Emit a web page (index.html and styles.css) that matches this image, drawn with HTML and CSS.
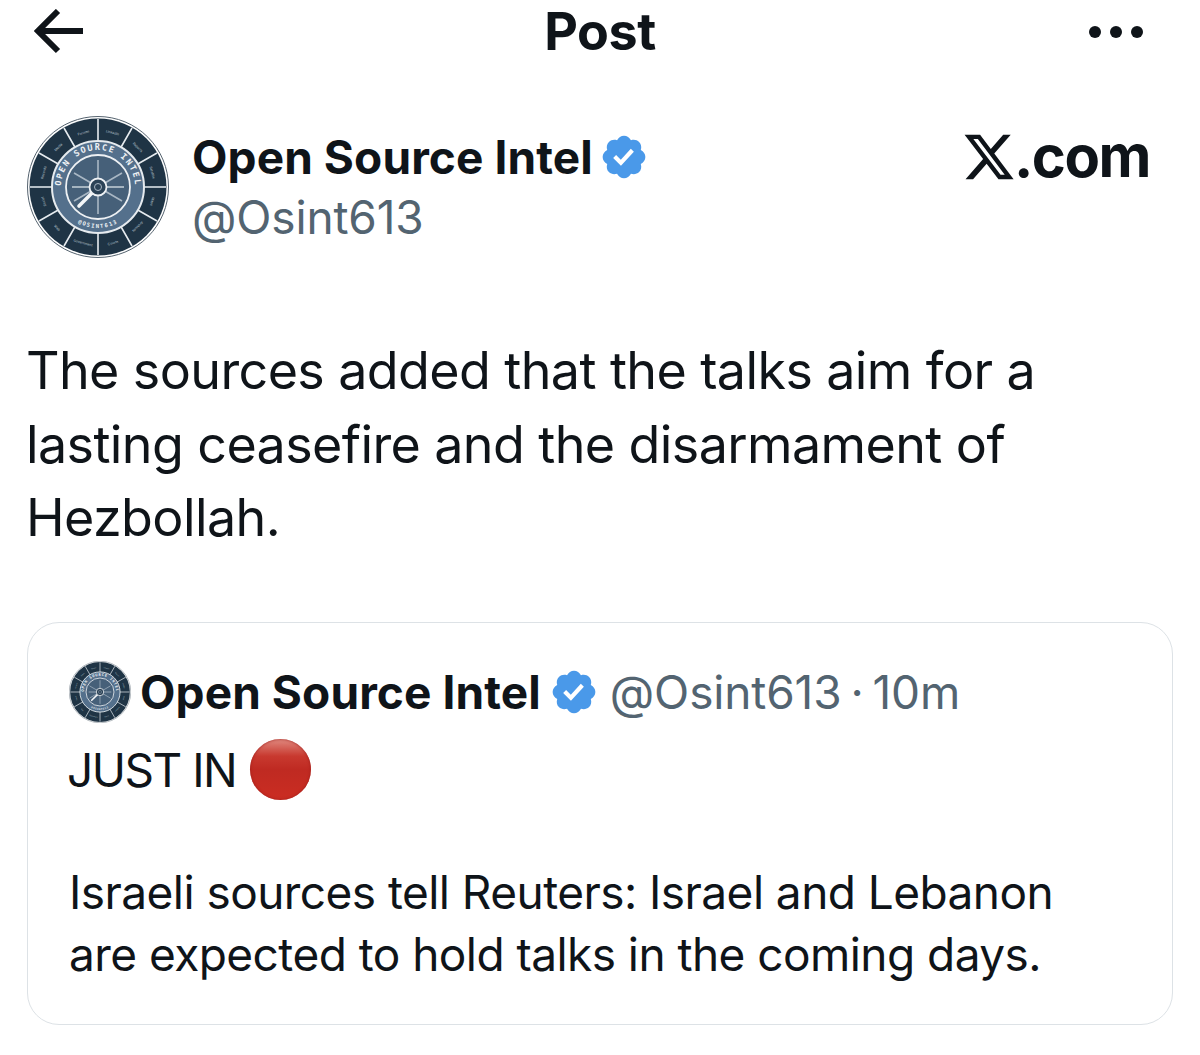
FILE: index.html
```html
<!DOCTYPE html>
<html lang="en">

<head>
    <meta charset="UTF-8">
    <title>Post</title>
    <link rel="stylesheet" href="styles.css">
</head>

<body>
    <div class="page">
        <div class="topbar">
            <svg class="back" viewBox="0 0 50 46">
                <path d="M49 22H4M24 2L4 22l20 20" fill="none" stroke="#0f1419" stroke-width="6"/>
            </svg>
            <div class="topbar-title">Post</div>
            <svg class="more" viewBox="0 0 56 14">
                <circle cx="7" cy="7" r="6"/>
                <circle cx="28" cy="7" r="6"/>
                <circle cx="49" cy="7" r="6"/>
            </svg>
        </div>

        <div class="author">
            <svg class="avatar" viewBox="0 0 142 142">
                <defs>
                    <path id="badge-path" d="M22.25 12c0-1.43-.88-2.67-2.19-3.34.46-1.39.2-2.9-.81-3.91s-2.52-1.27-3.91-.81c-.66-1.31-1.91-2.19-3.34-2.19s-2.67.88-3.33 2.19c-1.4-.46-2.91-.2-3.92.81s-1.26 2.52-.8 3.91c-1.31.67-2.2 1.91-2.2 3.34s.89 2.67 2.2 3.34c-.46 1.39-.21 2.9.8 3.91s2.52 1.26 3.91.81c.67 1.31 1.91 2.19 3.34 2.19s2.68-.88 3.34-2.19c1.39.45 2.9.2 3.91-.81s1.27-2.52.81-3.91c1.31-.67 2.19-1.91 2.19-3.34zm-11.71 4.2L6.8 12.46l1.41-1.42 2.26 2.26 4.8-5.23 1.47 1.36-6.2 6.77z"/>
                    <path id="ring-top" d="M34 71a37 37 0 0 1 74 0"/>
                    <path id="ring-bottom" d="M30 71a41 41 0 0 0 82 0"/>
                    <symbol id="wheel" viewBox="0 0 142 142">
                        <circle cx="71" cy="71" r="70.5" fill="#fff" stroke="#55636f" stroke-width="1"/>
                        <circle cx="71" cy="71" r="68.5" fill="#1f3445"/>
                        <g stroke="#e6ebef" stroke-width="1.6">
                            <path d="M71 3v24M71 115v24M3 71h24M115 71h24"/>
                            <path d="M105 12l-12 21M49 109l-12 21M130 37l-21 12M33 93l-21 12"/>
                            <path d="M37 12l12 21M93 109l12 21M12 37l21 12M109 93l21 12"/>
                        </g>
                        <g class="wheel-label">
                            <text x="71" y="16" transform="rotate(-15 71 71)">Forums</text>
                            <text x="71" y="16" transform="rotate(15 71 71)">LinkedIn</text>
                            <text x="71" y="16" transform="rotate(45 71 71)">Reports</text>
                            <text x="71" y="16" transform="rotate(75 71 71)">Satellite</text>
                            <text x="71" y="16" transform="rotate(105 71 71)">Maps</text>
                            <text x="71" y="16" transform="rotate(135 71 71)">Archives</text>
                            <text x="71" y="130" transform="rotate(-15 71 71)">Courts</text>
                            <text x="71" y="130" transform="rotate(15 71 71)">Government</text>
                            <text x="71" y="130" transform="rotate(45 71 71)">Web</text>
                            <text x="71" y="16" transform="rotate(-105 71 71)">Social</text>
                            <text x="71" y="16" transform="rotate(-75 71 71)">Records</text>
                            <text x="71" y="16" transform="rotate(-45 71 71)">Media</text>
                        </g>
                        <circle cx="71" cy="71" r="46" fill="#54708c" stroke="#e6ebef" stroke-width="2"/>
                        <circle cx="71" cy="71" r="32" fill="#466079" stroke="#eef1f4" stroke-width="1.8"/>
                        <text class="ring-text"><textPath href="#ring-top" startOffset="50%" text-anchor="middle">OPEN SOURCE INTEL</textPath></text>
                        <text class="ring-text ring-text-small"><textPath href="#ring-bottom" startOffset="50%" text-anchor="middle">@OSINT613</textPath></text>
                        <g stroke="#a9b7c4" stroke-width="1.6">
                            <path d="M71 44v54M47 57l48 28M47 85l48-28"/>
                        </g>
                        <path d="M45 71h52" stroke="#c6d0d9" stroke-width="1.4"/>
                        <path d="M65 77L52 90" stroke="#f4f6f8" stroke-width="3.6" stroke-linecap="round"/>
                        <circle cx="71" cy="71" r="8.5" fill="#2b4256" stroke="#eef1f4" stroke-width="1.8"/>
                        <circle cx="71" cy="71" r="3.5" fill="none" stroke="#a9b7c4" stroke-width="1"/>
                    </symbol>
                </defs>
                <use href="#wheel"/>
            </svg>
            <div class="author-text">
                <div class="author-name">
                    <span>Open Source Intel</span>
                    <svg class="badge" viewBox="0 0 24 24"><use href="#badge-path"/></svg>
                </div>
                <div class="author-handle">@Osint613</div>
            </div>
            <div class="brand">
                <svg class="brand-x" viewBox="1 2 22 20">
                    <path d="M18.244 2.25h3.308l-7.227 8.26 8.502 11.24H16.17l-5.214-6.817L4.99 21.75H1.68l7.73-8.835L1.254 2.25H8.08l4.713 6.231zm-1.161 17.52h1.833L7.084 4.126H5.117z"/>
                </svg>
                <span>.com</span>
            </div>
        </div>

        <p class="post-text">The sources added that the talks aim for a<br>lasting ceasefire and the disarmament of<br>Hezbollah.</p>

        <div class="quote">
            <div class="quote-head">
                <svg class="quote-avatar" viewBox="0 0 142 142"><use href="#wheel"/></svg>
                <span class="quote-name">Open Source Intel</span>
                <svg class="quote-badge" viewBox="0 0 24 24"><use href="#badge-path"/></svg>
                <span class="quote-meta">@Osint613<span class="quote-dot">·</span>10m</span>
            </div>
            <div class="quote-just"><span>JUST IN</span><span class="red-dot"></span></div>
            <p class="quote-text">Israeli sources tell Reuters: Israel and Lebanon<br>are expected to hold talks in the coming days.</p>
        </div>
    </div>
</body>

</html>
```
FILE: styles.css
```css
html,
body {
    margin: 0;
    padding: 0;
    background: #fff;
}

.page {
    width: 1200px;
    height: 1055px;
    overflow: hidden;
    color: #0f1419;
    font-family: "Inter", "Liberation Sans", sans-serif;
}

.topbar {
    display: grid;
    grid-template-columns: 1fr auto 1fr;
    align-items: center;
    height: 62px;
    padding: 0 56px 0 34px;
}

.back {
    width: 50px;
    height: 46px;
}

.topbar-title {
    margin-right: -22px;
    font-size: 52px;
    font-weight: 700;
    letter-spacing: -0.4px;
}

.more {
    justify-self: end;
    width: 56px;
    height: 14px;
    fill: #0f1419;
}

.author {
    display: flex;
    align-items: center;
    margin-top: 54px;
    padding: 0 50px 0 27px;
}

.avatar {
    width: 142px;
    height: 142px;
    flex-shrink: 0;
}

.wheel-label {
    fill: #b9c4ce;
    font-size: 3.4px;
    text-anchor: middle;
}

.ring-text {
    fill: #eef2f5;
    font-family: "DejaVu Sans Mono", monospace;
    font-size: 8.5px;
    font-weight: 700;
    letter-spacing: 1.6px;
}

.ring-text-small {
    font-size: 5.5px;
    letter-spacing: 1.4px;
}

.author-text {
    margin-left: 23px;
    flex: 1;
}

.author-name {
    display: flex;
    align-items: center;
    height: 60px;
    font-size: 46px;
    font-weight: 700;
    letter-spacing: 0.1px;
}

.badge {
    width: 50px;
    height: 50px;
    margin-left: 6px;
    fill: #4a99e9;
}

.author-handle {
    height: 60px;
    line-height: 60px;
    font-size: 46px;
    color: #536471;
    letter-spacing: -0.15px;
}

.brand {
    display: flex;
    align-items: center;
    align-self: flex-start;
    margin-top: 5px;
    font-size: 58px;
    font-weight: 700;
    letter-spacing: -1.5px;
}

.brand-x {
    width: 50px;
    height: 46px;
    margin-top: 2px;
    fill: #0f1419;
}

.post-text {
    margin: 76px 0 0;
    padding-left: 26px;
    font-size: 52px;
    line-height: 73.5px;
    letter-spacing: -0.6px;
}

.quote {
    box-sizing: border-box;
    width: 1146px;
    height: 403px;
    margin: 67px 0 0 27px;
    padding: 34px 41px 0;
    border: 1.5px solid #dde2e6;
    border-radius: 32px;
}

.quote-head {
    display: flex;
    align-items: center;
    height: 70px;
    font-size: 46px;
}

.quote-avatar {
    width: 62px;
    height: 62px;
    flex-shrink: 0;
}

.quote-name {
    margin-left: 9px;
    font-weight: 700;
    letter-spacing: 0.1px;
}

.quote-badge {
    width: 50px;
    height: 50px;
    margin-left: 8px;
    fill: #4a99e9;
}

.quote-meta {
    margin-left: 11px;
    color: #536471;
    letter-spacing: -0.15px;
}

.quote-dot {
    margin: 0 9px;
}

.quote-just {
    display: flex;
    align-items: center;
    gap: 14px;
    height: 76px;
    margin-top: 5px;
    margin-left: -2px;
    font-size: 46px;
    letter-spacing: -1.5px;
}

.red-dot {
    width: 61px;
    height: 61px;
    border-radius: 50%;
    background: linear-gradient(#e08a80 0%, #c8392f 28%, #bf2a22 50%, #cb2d22 100%);
    box-shadow: inset 0 0 3px #9c1c18;
}

.quote-text {
    margin: 53px 0 0;
    font-size: 46px;
    line-height: 62px;
    letter-spacing: -0.55px;
}
```
